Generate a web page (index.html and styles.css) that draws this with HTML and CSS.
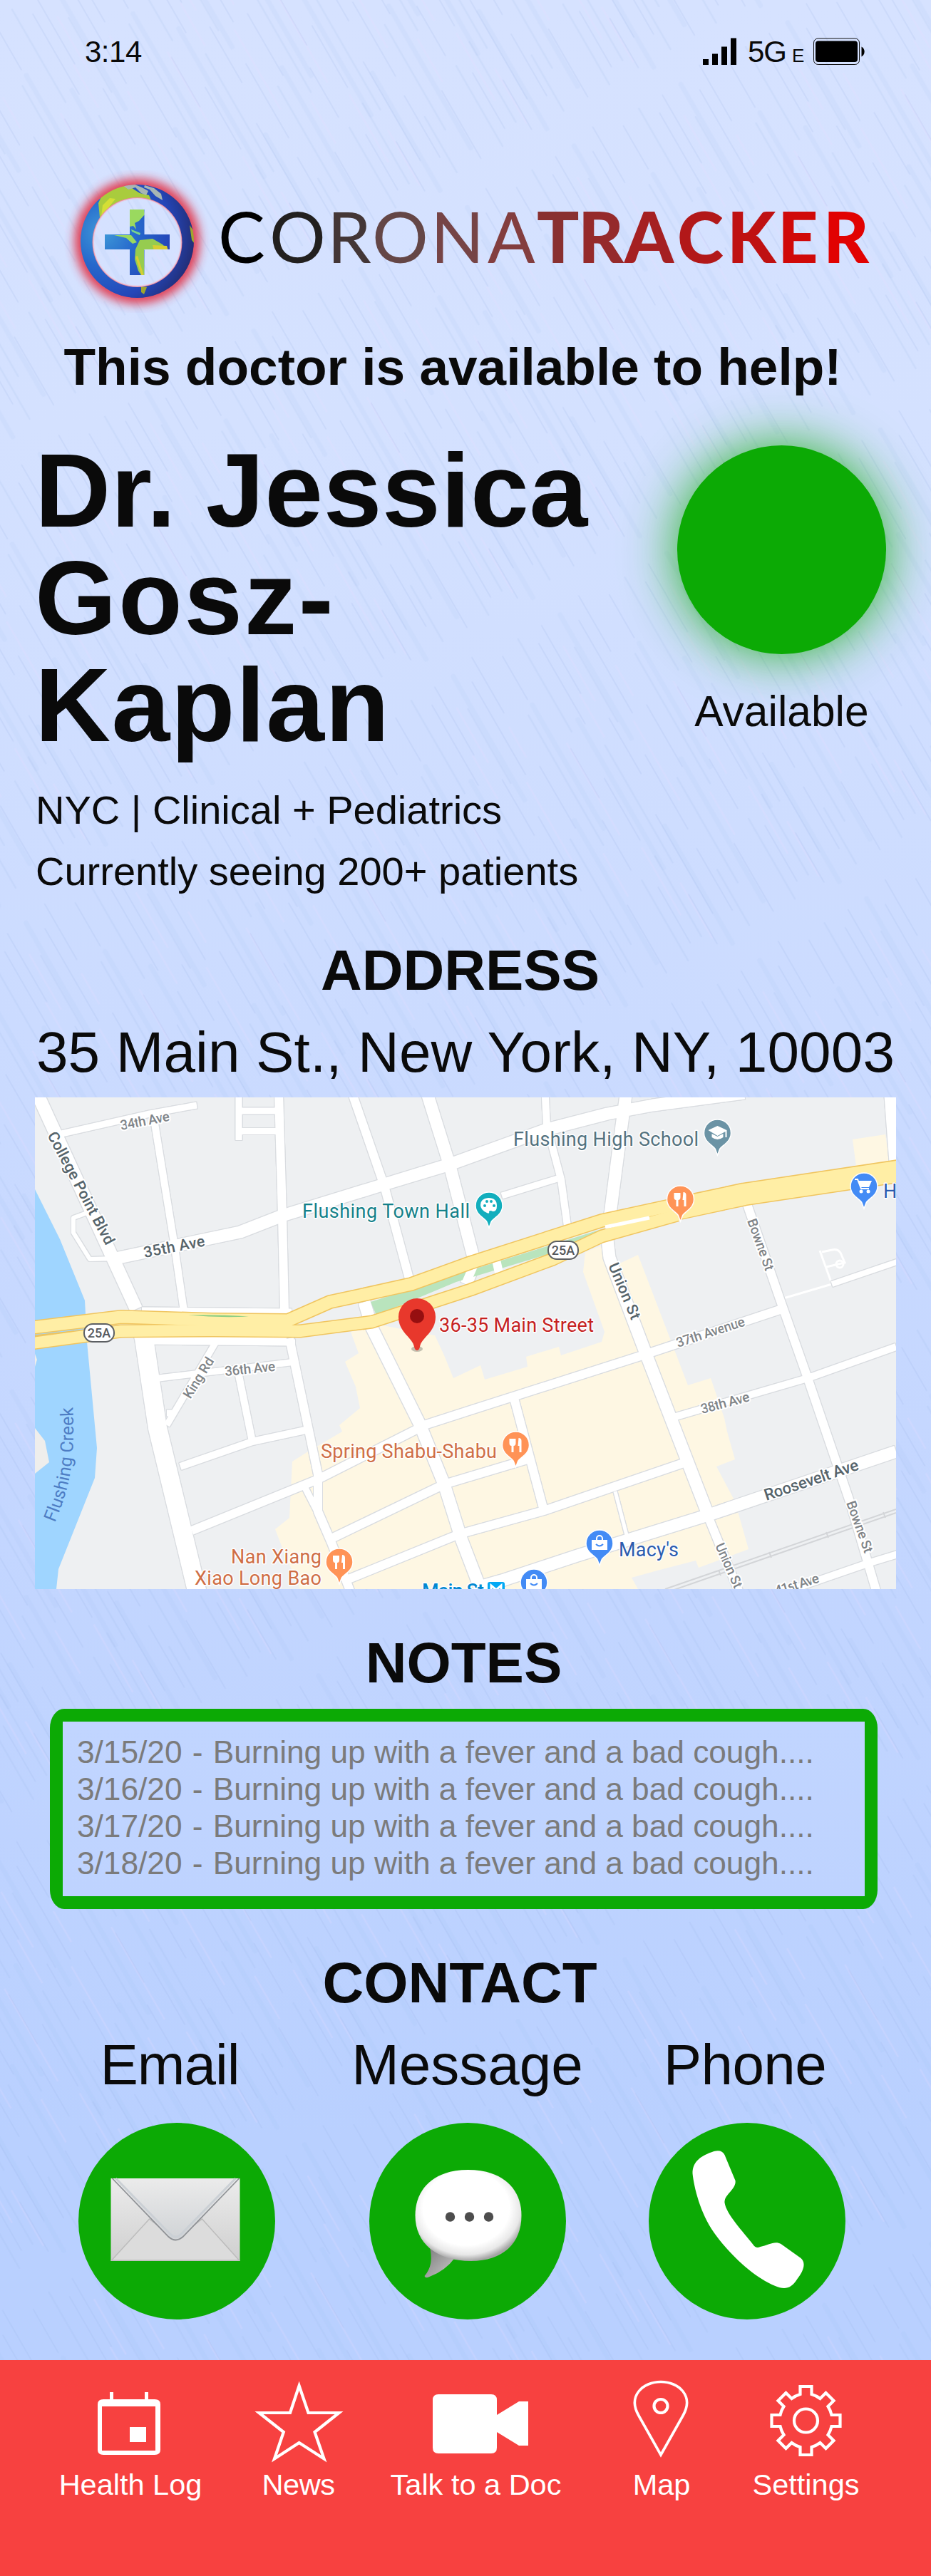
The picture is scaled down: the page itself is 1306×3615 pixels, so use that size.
FILE: index.html
```html
<!DOCTYPE html>
<html lang="en">
<head>
<meta charset="utf-8">
<title>CoronaTracker – Doctor</title>
<link rel="stylesheet" href="styles.css">
</head>
<body>
<div class="page">
  <svg class="texture" width="1306" height="3312" aria-hidden="true">
    <defs>
      <pattern id="rain" width="173" height="560" patternUnits="userSpaceOnUse" patternTransform="rotate(-30)">
        <g fill="none" stroke="#8fabdf" stroke-linecap="round">
          <path stroke-width="2.600" opacity=".12" d="M8 20v150M39 210v190M71 70v120M104 300v170M140 120v210M162 400v130M22 380v130M88 440v90"/>
          <path stroke-width="1.600" opacity=".2" d="M15 250v100M30 40v130M52 330v160M63 180v90M81 250v120M95 40v150M118 190v100M127 420v110M150 30v70M156 300v80M46 20v110M112 10v90M4 420v90M168 190v80M78 400v100M36 450v80"/>
          <path stroke-width="7" opacity=".08" d="M24 160v240M76 20v200M122 280v230M152 110v200M55 350v190"/>
        </g>
        <g fill="none" stroke="#e9dcff" stroke-width="2.500" opacity=".22">
          <path d="M12 360v110M44 130v70M58 60v90M91 200v130M134 340v70M167 180v150M108 120v50M34 430v90"/>
        </g>
      </pattern>
    </defs>
    <rect width="1306" height="3312" fill="url(#rain)"/>
  </svg>

  <header class="status">
    <span class="time">3:14</span>
    <svg class="signal" viewBox="986 53 48 38"><path d="M986 83h8v8h-8zM999 75.500h8v15.500h-8zM1012 65.500h8v25.500h-8zM1025 53.500h8v37.500h-8z"/></svg>
    <span class="net">5G</span><span class="edge">E</span>
    <svg class="battery" viewBox="1140 53 75 39"><rect x="1141.500" y="54" width="64" height="36.500" rx="6" fill="none" stroke="#111"/><rect x="1144" y="57.500" width="59" height="29.500" rx="4"/><path d="M1208.500 65.500a8 8 0 0 1 0 14z"/></svg>
  </header>

  <svg class="brand" viewBox="0 239 1306 200" role="img" aria-label="CoronaTracker">
    <defs>
      <radialGradient id="ocean" cx=".2" cy=".42" r=".85"><stop offset="0" stop-color="#3f9ad8"/><stop offset=".35" stop-color="#2668cc"/><stop offset=".7" stop-color="#2446b8"/><stop offset="1" stop-color="#22296a"/></radialGradient>
      <filter id="glow" x="-40%" y="-40%" width="180%" height="180%"><feGaussianBlur stdDeviation="7"/></filter>
      <filter id="soft" x="-10%" y="-10%" width="120%" height="120%"><feGaussianBlur stdDeviation=".7"/></filter>
      <mask id="ringcross"><circle cx="192.500" cy="338.500" r="79.500" fill="#fff"/><circle cx="192.500" cy="340" r="63"/><path fill="#fff" d="M182 294h20.500v35H238v21h-35.500v36H182v-36h-35v-21h35z"/></mask>
      <mask id="halo"><rect x="60" y="220" width="270" height="240" fill="#fff"/><circle cx="192.500" cy="340" r="62"/></mask>
    </defs>
    <g mask="url(#halo)"><circle cx="192.500" cy="338.500" r="88" fill="#e2384e" opacity=".95" filter="url(#glow)"/></g>
    <circle cx="192.500" cy="340" r="62" fill="none" stroke="#f2bfd2" stroke-width="3" opacity=".6"/>
    <g mask="url(#ringcross)">
      <circle cx="192.500" cy="338.500" r="80" fill="url(#ocean)"/>
      <g filter="url(#soft)">
        <path fill="#a9cc3e" d="M140 305l-2-20 6-13 16-8 18-6 10 8 8 5 13 3 4 9-14 1-6-6-14 1-13 6-12 6-6 12z"/>
        <path fill="#d4df35" d="M142 304l2-16 10-10 8 1-8 10-8 15z"/>
        <path fill="#a7b6b4" d="M172 260l8 6 10-3 8 8 7 3 3-6-9-5-10-4zM203 260l13 4 10 8 2 9-10-6-8-9-8-3z"/>
        <path fill="#9ad95f" d="M182 294h20l1 7-8 9-6 3 2 9-4-5-5 1zM160 330h24l8 10-6 2-9-8z"/>
        <path fill="#7ad58a" d="M184 322l13 5-1 3-11-5z"/>
        <path fill="#96cc4f" d="M196 337l18-2 14 8 7 7-33 1 1 43-9-14-5-16 1-14z"/>
        <path fill="#d8ce31" d="M190 360l10 31 3-1-10-31zM214 344l20 1 2 7h-20z"/>
        <path fill="#9fa62e" d="M198 402l8 1-4 10-4-3zM266 316l7 10 0 16-4-5z"/>
      </g>
    </g>
    <g class="wordmark">
      <text class="thin" y="369"><tspan x="306" fill="#000">C</tspan><tspan x="378" fill="#22201f">O</tspan><tspan x="459" fill="#433636">R</tspan><tspan x="522" fill="#644646">O</tspan><tspan x="604" fill="#764446">N</tspan><tspan x="684" fill="#833e3f">A</tspan></text>
      <text class="heavy" y="369"><tspan x="753" fill="#893030">T</tspan><tspan x="811" fill="#952a2b">R</tspan><tspan x="876" fill="#a52022">A</tspan><tspan x="950" fill="#b21819">C</tspan><tspan x="1020" fill="#bf1112">K</tspan><tspan x="1091" fill="#d00909">E</tspan><tspan x="1155" fill="#e10202">R</tspan></text>
    </g>
  </svg>

  <p class="lead">This doctor is available to help!</p>

  <section class="doctor">
    <h1><span class="n1">Dr. Jessica</span><br><span class="n2">Gosz-</span><br><span class="n3">Kaplan</span></h1>
    <div class="availability"><div class="lamp"></div><div class="state">Available</div></div>
  </section>
  <div class="facts"><p class="fact1">NYC | Clinical + Pediatrics</p><p class="fact2">Currently seeing 200+ patients</p></div>

  <h2 class="h-address">ADDRESS</h2>
  <p class="address">35 Main St., New York, NY, 10003</p>

  <svg class="map" viewBox="0 0 1208 690" role="img" aria-label="Map of 36-35 Main Street">
    <defs>
      <g id="roads">
        <path stroke-width="9" d="M33 52L161 23 227 11M286-5V60M286 19H342M286 47.500H342M655 138L733 114M254 343L185 460M174 394L366 371M378 546L397 583M185 443l10 0"/>
        <path stroke-width="10" d="M166 24L195 203 209 300M286 390L305 483M204 518L305 483 384 466M716-5V0L718 40 738 115 748 188M899 448L1084 394 1208 350M1058 692L1171 653 1220 638"/>
        <path stroke-width="8" d="M1118 262L1215 229"/>
        <path stroke-width="6" d="M73 162L54 169V190L77 227 113 226"/>
        <path stroke-width="12" d="M342-5L347 166 350 301M446-3L490 124 526 258M357 338L397 529V581L416 625 445 700M220 608L397 536 549 459 611 439 846 364 1048 297M414 620L574 543 691 508M435 678L595 613 714 580 910 513M672 422L714 580M999 150L1045 283 1084 394 1143 567 1180 692M943 585L988 695"/>
        <path stroke-width="5" d="M814 553L831 618"/>
        <path stroke-width="9" d="M150 299L360 301M153 342L365 344"/>
        <path stroke-width="17" d="M113 226L288 189 347 166 490 122 582 94 718 45 803 23 867 11 995-6M551-3L582 96 617 232 605 262M829-3L823 40 806 171M1200-3L1207 90M462 287L473 324 540 459 574 543 599 622 627 695M803 199L806 225 856 357 944 585M620 688L655 678 761 643 948 585 1208 497"/>
        <path stroke-width="18" d="M2-8L142 297"/>
        <path stroke-width="26" d="M148 320L153 338 172 464 229 700"/>
      </g>
      <g id="fork" fill="#fff"><path d="M-9-9h9v6q0 4-3 4v9h-3v-9q-3 0-3-4z"/><path d="M4-10q4 0 4 4V10H5V1H3z"/></g>
      <path id="pin" d="M0 31L-3 23C-5 18-19 13-19 0A19 19 0 1 1 19 0C19 13 5 18 3 23z" stroke="#fff" stroke-width="1.500"/>
      <path id="creek" d="M28 597C45 555 58 520 53 430"/>
    </defs>
    <rect width="1208" height="690" fill="#eef0f2"/>
    <path fill="#9fd5ff" d="M0 129L35 199 70 285 73 343 87 492 84 534 33 662 30 690H0z"/>
    <path fill="#efeeec" d="M0 464L14 482 20 512 0 528zM0 360l3 8-3 10z"/>
    <path fill="#fef7e3" d="M443 329L454 359 435 371 450 406 456 436 427 460 431 469 380 499 361 511 357 590 337 606 347 632 372 690H846L837 674 873 664 927 650 931 660 1001 634 982 567 956 518 982 508 971 469 967 450 948 394 916 404 846 221 803 241 795 208 772 217 769 245 799 329 795 343 738 362 735 350 689 364 691 378 631 396 625 376 587 394 574 362 561 334 488 320zM1147 59L1193 52 1199 92 1152 97z"/>
    <path class="rail" d="M884 690L1208 578M888 694L1208 583M959 663l3 8M1030 638l3 8M1110 610l3 8M1190 582l3 8"/>
    <path class="lane" d="M1050 282L1118 262 1101 215M1110 238l26-6-6-14q-4-6-12-4l-14 3"/><circle class="lane" cx="1129" cy="234" r="5"/>
    <use href="#roads" class="casing"/>
    <use href="#roads" class="street"/>
    <path fill="#fff" d="M153 302h200v38H153z"/>
    <path fill="#b9e4bd" d="M471 287L603 245 795 185 727 218 591 259 479 306z"/>
    <path stroke="#fff" stroke-width="12" fill="none" d="M647 228l4 18M617 232L604 262"/>
    <g fill="none" stroke-linejoin="round">
      <path class="hwc" stroke-width="20" d="M-4 323L121 308 250 312 355 313 414 287 456 278 528 262 611 232 795 173 901 150"/>
      <path class="hwc" stroke-width="19" d="M-4 345L121 328 250 327 372 328 473 315 611 270 727 227 795 195 901 165"/>
      <path class="hwc" stroke-width="33" d="M901 156L995 136 1215 103"/>
      <path class="hw" stroke-width="17" d="M-4 323L121 308 250 312 355 313 414 287 456 278 528 262 611 232 795 173 905 149"/>
      <path class="hw" stroke-width="16" d="M-4 345L121 328 250 327 372 328 473 315 611 270 727 227 795 195 905 164"/>
      <path class="hw" stroke-width="30" d="M898 157L995 136 1215 103"/>
      <path stroke="#efc45c" stroke-width="1.500" d="M0 334L55 328"/>
      <path stroke="#fff" stroke-width="5" d="M800 182L862 169"/>
    </g>
    <path fill="#8fcf86" d="M215 305.500q40-1 85 2q-42 2-85-2z"/>

    <g class="lbl minor">
      <text transform="translate(121 46) rotate(-11)" textLength="70">34th Ave</text>
      <text transform="translate(267 391) rotate(-6)" textLength="71">36th Ave</text>
      <text transform="translate(218 424) rotate(-58)" textLength="64">King Rd</text>
      <text transform="translate(902 351) rotate(-18)" textLength="100">37th Avenue</text>
      <text transform="translate(936 444) rotate(-15)" textLength="70">38th Ave</text>
      <text transform="translate(999 173) rotate(70)" textLength="76">Bowne St</text>
      <text transform="translate(1138 569) rotate(70)" textLength="76">Bowne St</text>
      <text transform="translate(954 629) rotate(66)" textLength="67">Union St</text>
      <text transform="translate(1040 699) rotate(-17)" textLength="64">41st Ave</text>
    </g>
    <g class="lbl major">
      <text transform="translate(17 53) rotate(62)" textLength="176">College Point Blvd</text>
      <text transform="translate(154 225) rotate(-11)" textLength="87">35th Ave</text>
      <text transform="translate(804 236) rotate(67)" textLength="84">Union St</text>
      <text class="big" transform="translate(1026 566) rotate(-18.500)" textLength="138">Roosevelt Ave</text>
    </g>
    <text class="water"><textPath href="#creek" textLength="166">Flushing Creek</textPath></text>
    <g class="shield"><rect x="69" y="318" width="42" height="25" rx="12"/><text x="90" y="337">25A</text><rect x="720" y="202" width="42" height="25" rx="12"/><text x="741" y="221">25A</text></g>
    <g class="poi">
      <text x="375" y="168.500" textLength="235" fill="#14818a">Flushing Town Hall</text>
      <text x="671" y="67.500" textLength="260" fill="#54727f">Flushing High School</text>
      <text x="567" y="329" textLength="217" fill="#c5221f">36-35 Main Street</text>
      <text x="401" y="506" textLength="247" fill="#cf6e45">Spring Shabu-Shabu</text>
      <text x="275" y="654" textLength="127" fill="#cf6e45">Nan Xiang</text>
      <text x="224" y="684" textLength="178" fill="#cf6e45">Xiao Long Bao</text>
      <text x="819" y="643.500" textLength="84" fill="#2b5cae">Macy's</text>
      <text x="1190" y="141" fill="#2b5cae">H</text>
      <text x="543" y="702" textLength="87" class="metro">Main St</text>
    </g>
    <rect x="635" y="680" width="24" height="20" rx="3" fill="#03a9f4"/><path d="M640 694v-9l7 6 7-6v9" fill="none" stroke="#fff" stroke-width="3"/>
    <g transform="translate(957.500 50)"><use href="#pin" fill="#6b93a5"/><path fill="#fff" d="M0-10L13-4V6H11V-2L0 4-13-4zM-8 1L0 5 8 1v5q-8 6-16 0z"/></g>
    <g transform="translate(637 152)"><use href="#pin" fill="#12aebd"/><path fill="#fff" d="M-1-11q12 0 12 11 0 9-6 8-3-2-5 0 1 4-3 2-9-4-9-11 0-9 11-10z"/><g fill="#12aebd"><circle cx="-6" cy="0" r="2"/><circle cx="-3" cy="-6" r="2"/><circle cx="3" cy="-6" r="2"/><circle cx="7" cy="0" r="2"/></g></g>
    <g transform="translate(905.500 143)"><use href="#pin" fill="#ff9356"/><use href="#fork"/></g>
    <g transform="translate(674.500 488)"><use href="#pin" fill="#ff9356"/><use href="#fork"/></g>
    <g transform="translate(427 652)"><use href="#pin" fill="#ff9356"/><use href="#fork"/></g>
    <g transform="translate(1163 125)"><use href="#pin" fill="#438bf5"/><path fill="none" stroke="#fff" stroke-width="2" d="M-13-10h4l5 13h11"/><path fill="#fff" d="M-8-8H11L7 1H-5z"/><circle cx="-4" cy="7" r="2.500" fill="#fff"/><circle cx="6" cy="7" r="2.500" fill="#fff"/></g>
    <g transform="translate(792 626)"><use href="#pin" fill="#438bf5"/><path fill="#fff" d="M-11-5h22V9h-22z"/><path d="M-4-5v-2a4 4 0 0 1 8 0v2" fill="none" stroke="#fff" stroke-width="2"/><path d="M-5 1q5 5 10 0" fill="none" stroke="#438bf5" stroke-width="2"/></g>
    <g transform="translate(700 681)"><use href="#pin" fill="#438bf5"/><path fill="#fff" d="M-11-5h22V9h-22z"/><path d="M-4-5v-2a4 4 0 0 1 8 0v2" fill="none" stroke="#fff" stroke-width="2"/><path d="M-5 1q5 5 10 0" fill="none" stroke="#438bf5" stroke-width="2"/></g>
    <ellipse cx="536" cy="353" rx="8" ry="4" fill="#9b9a8c" opacity=".6"/>
    <path fill="#e8382c" d="M536 355q-3 0-4-5c-2-13-22-20-22-42a26 26 0 0 1 52 0c0 22-20 29-22 42q-1 5-4 5z"/><circle cx="536" cy="307" r="10" fill="#960f10"/>
  </svg>

  <h2 class="h-notes">NOTES</h2>
  <div class="notes"><div class="notes-in">
    <p>3/15/20 <span class="dash">-</span> Burning up with a fever and a bad cough....</p>
    <p>3/16/20 <span class="dash">-</span> Burning up with a fever and a bad cough....</p>
    <p>3/17/20 <span class="dash">-</span> Burning up with a fever and a bad cough....</p>
    <p>3/18/20 <span class="dash">-</span> Burning up with a fever and a bad cough....</p>
  </div></div>

  <h2 class="h-contact">CONTACT</h2>
  <section class="contacts">
    <div class="contact"><span class="c-email">Email</span>
      <svg viewBox="109.500 2979 276 276"><defs><linearGradient id="env" x1="0" y1="0" x2="0" y2="1"><stop offset="0" stop-color="#ececec"/><stop offset="1" stop-color="#cfcfcf"/></linearGradient><linearGradient id="flap" x1="0" y1="0" x2="0" y2="1"><stop offset="0" stop-color="#ebebeb"/><stop offset="1" stop-color="#d0d3d6"/></linearGradient></defs>
        <circle cx="247.500" cy="3117" r="138" fill="#0caa05"/>
        <rect x="155" y="3057" width="181" height="116" fill="url(#env)"/>
        <path d="M156 3172L209 3114 246 3143 283 3114 335 3172z" fill="#dcdcdc" stroke="#bcbcbc" stroke-width="1.500"/>
        <path d="M157 3057L236 3139Q246 3148 256 3139L335 3057z" fill="url(#flap)"/>
        <path d="M157 3057L236 3139Q246 3148 256 3139L335 3057" fill="none" stroke="#8f9296" stroke-width="1.800"/>
        <path d="M162 3057L238 3135Q246 3143 254 3135L330 3057" fill="none" stroke="#cbd0d5" stroke-width="3"/></svg></div>
    <div class="contact"><span>Message</span>
      <svg viewBox="517.500 2979 276 276"><defs><radialGradient id="bub" cx=".48" cy=".42" r=".58"><stop offset=".7" stop-color="#fff"/><stop offset=".88" stop-color="#e8e8e8"/><stop offset="1" stop-color="#a5a5a5"/></radialGradient><linearGradient id="tail" x1="0" y1="0" x2="1" y2="1"><stop offset="0" stop-color="#777"/><stop offset="1" stop-color="#ccc"/></linearGradient></defs>
        <circle cx="655.500" cy="3117" r="138" fill="#0caa05"/>
        <path d="M602 3152Q609 3178 595 3194 596 3198 602 3195 624 3187 638 3168z" fill="url(#tail)"/>
        <path d="M656 3045C705 3045 731 3072 731 3109 731 3148 705 3173 660 3173 612 3173 582 3148 582 3109 582 3072 608 3045 656 3045z" fill="url(#bub)"/>
        <g fill="#4d4d4d"><circle cx="631" cy="3111" r="6.700"/><circle cx="658" cy="3111" r="6.700"/><circle cx="685" cy="3111" r="6.700"/></g></svg></div>
    <div class="contact"><span class="c-phone">Phone</span>
      <svg viewBox="909.500 2979 276 276"><circle cx="1047.500" cy="3117" r="138" fill="#0caa05"/>
        <path fill="#fff" d="M1001 3019Q1012 3016 1016 3024Q1023 3041 1031 3060C1033 3072 1015 3080 1016 3091C1018 3107 1042 3132 1056 3150Q1060 3156 1066 3153C1077 3151 1086 3144 1095 3149Q1109 3159 1123 3169C1131 3176 1126 3188 1118 3198C1109 3213 1099 3213 1087 3208C1055 3195 1020 3160 1001 3133C982 3106 973 3070 971 3050C971 3033 983 3025 1001 3019z"/></svg></div>
  </section>

  <nav class="tabs">
    <a><svg viewBox="65 3312 236 150" height="150"><path fill-rule="evenodd" d="M145 3367h72q8 0 8 7v64q0 7-8 7h-72q-8 0-8-7v-64q0-7 8-7zM143 3377v62h75v-62z"/><path d="M154 3357h5v11h-5zM203 3357h5v11h-5zM182 3406h23v21h-23z"/></svg>Health Log</a>
    <a class="t-news"><svg viewBox="301 3312 235 150" height="150"><path class="line" d="M419.600 3348L432.500 3386H475.500L441.500 3413 454.500 3450.500 419.600 3428 385 3450.500 397.800 3413 363.500 3386H407z"/></svg><span>News</span></a>
    <a><svg viewBox="536 3312 263 150" height="150"><path d="M615 3360h74q8 0 8 8v21l31-19h13v62h-13l-31-19v22q0 8-8 8h-74q-8 0-8-8v-67q0-8 8-8z"/></svg>Talk to a Doc</a>
    <a><svg viewBox="799 3312 258 150" height="150"><path class="line thin-line" d="M927 3445L896 3390C880 3362 902 3342.500 927 3342.500S974 3362 958 3390z"/><circle class="line" cx="927" cy="3376.500" r="9.500"/></svg>Map</a>
    <a><svg viewBox="1057 3312 147 150" height="150"><g transform="translate(1130.500 3397)"><circle class="line" r="16.500"/><path class="line" d="M-8-48H8V-37A36 36 0 0 1 20-31L28-39 39-28 31-20A36 36 0 0 1 36-8H48V8H36A36 36 0 0 1 31 20L39 28 28 39 20 31A36 36 0 0 1 8 37V48H-8V37A36 36 0 0 1-20 31L-28 39-39 28-31 20A36 36 0 0 1-36 8H-48V-8H-36A36 36 0 0 1-31-20L-39-28-28-39-20-31A36 36 0 0 1-8-37z"/></g></svg>Settings</a>
  </nav>
</div>
</body>
</html>
```
FILE: styles.css
```css
* { box-sizing: border-box; margin: 0; padding: 0; }
body { width: 1306px; font-family: "Liberation Sans", Arial, sans-serif; color: #0a0a0a; }
.page { position: relative; isolation: isolate; height: 3615px; overflow: hidden; background: linear-gradient(#d6e2ff 0, #d4e1ff 600px, #c5d7ff 2000px, #b9d0ff 3000px, #b9d0ff 3312px); }
.texture { position: absolute; left: 0; top: 0; z-index: -1; }
svg { display: block; }
p, h1, h2, span { white-space: nowrap; }

.status { display: flex; height: 239px; padding: 48px 91px 0 119px; line-height: 50px; font-size: 42px; }
.time { margin-right: auto; letter-spacing: -.5px; }
.signal { width: 48px; height: 38px; margin: 5px 15px 0 0; }
.net { letter-spacing: -1px; width: 62px; }
.edge { font-size: 26px; line-height: 61px; width: 29px; }
.battery { width: 75px; height: 39px; margin-top: 5px; }

.brand { width: 1306px; height: 200px; }
.wordmark { font-family: Lato, sans-serif; font-size: 98.500px; }
.thin { font-weight: 400; }
.heavy { font-weight: 900; }

.lead { margin: 36px 0 0 89.500px; font-size: 73px; line-height: 80px; font-weight: 700; }
.doctor { display: flex; justify-content: space-between; margin-top: 58px; padding: 0 63px 0 49px; height: 451.500px; }
h1 { font-size: 147px; line-height: 150.500px; }
.n1 { letter-spacing: .7px; }
.n2 { letter-spacing: 2.600px; }
.n3 { letter-spacing: 1.400px; }
.availability { display: flex; flex-direction: column; align-items: center; width: 293px; padding-top: 11.500px; }
.lamp { flex: none; width: 293px; height: 293px; border-radius: 50%; background: #0caa05; box-shadow: 0 0 75px rgba(12, 170, 5, .85); }
.state { margin-top: 45.500px; font-size: 60.500px; line-height: 70px; }
.facts { margin: 29px 0 0 50px; font-size: 56px; line-height: 86px; }
h2 { text-align: center; font-size: 80px; line-height: 92px; }
.h-address { margin-top: 50.500px; padding-right: 15px; }
.address { margin-top: 23px; text-align: center; font-size: 80px; line-height: 92px; letter-spacing: .15px; }
.map { width: 1208px; height: 690px; margin: 17px 0 0 49px; overflow: hidden; font-family: Roboto, sans-serif; }
.casing, .street { fill: none; stroke-linejoin: round; }
.casing { stroke: #d9dce0; filter: drop-shadow(1px 0 0 #d9dce0) drop-shadow(-1px 0 0 #d9dce0) drop-shadow(0 1px 0 #d9dce0) drop-shadow(0 -1px 0 #d9dce0); }
.street { stroke: #fff; }
.rail { fill: none; stroke: #d3d5d8; stroke-width: 2; }
.lane { fill: none; stroke: #fff; stroke-width: 3; }
.hwc { stroke: #f0c560; }
.hw { stroke: #ffeea5; }
.lbl text { paint-order: stroke; stroke: #fff; stroke-width: 4px; stroke-linejoin: round; }
.minor { font-size: 19px; font-weight: 500; fill: #7f8488; }
.major { font-size: 21.500px; font-weight: 500; fill: #56646b; }
.major .big { font-size: 22.500px; }
.water { font-size: 25px; fill: #4e7dc4; }
.shield rect { fill: #fff; stroke: #5c5f63; stroke-width: 2; }
.shield text { font-size: 18px; font-weight: 500; fill: #55585c; text-anchor: middle; }
.poi { font-size: 27px; }
.poi text { paint-order: stroke; stroke: #fff; stroke-width: 3px; stroke-linejoin: round; }
.poi .metro { fill: #0288d1; font-weight: 500; }

.h-notes { margin-top: 58px; padding-right: 5px; }
.notes { width: 1161px; height: 281px; margin: 18px 0 0 70px; padding: 18px; background: #0caa05; border-radius: 20px / 27px; }
.notes-in { height: 245px; padding: 16.500px 0 0 20px; font-size: 44.300px; line-height: 52.300px; letter-spacing: -.04px; color: #7b7b7b; background: linear-gradient(#c1d5ff, #bed3ff); }
.dash { padding: 0 2px; }
.h-contact { margin-top: 58px; padding-right: 16px; }
.contacts { display: grid; grid-template-columns: 407px 409px 375px; margin: 23px 0 0 44px; }
.contact { display: flex; flex-direction: column; align-items: center; gap: 35px; font-size: 80px; line-height: 92px; }
.contact svg { width: 276px; height: 276px; }
.c-email { margin-right: 19px; letter-spacing: -1px; }
.c-phone { margin-right: 5px; letter-spacing: -.6px; }

.tabs { display: grid; grid-template-columns: 236px 235px 263px 258px 147px; height: 303px; margin-top: 57px; padding-left: 65px; background: #f74140; }
.tabs a { display: flex; flex-direction: column; align-items: center; color: #fff; font-size: 41.500px; line-height: 50px; white-space: nowrap; }
.tabs svg { width: 100%; fill: #fff; flex: none; }
.t-news span { letter-spacing: -.5px; }
.tabs .line { fill: none; stroke: #fff; stroke-width: 4.200; stroke-miterlimit: 10; }
.tabs .thin-line { stroke-width: 3.600; }
```
